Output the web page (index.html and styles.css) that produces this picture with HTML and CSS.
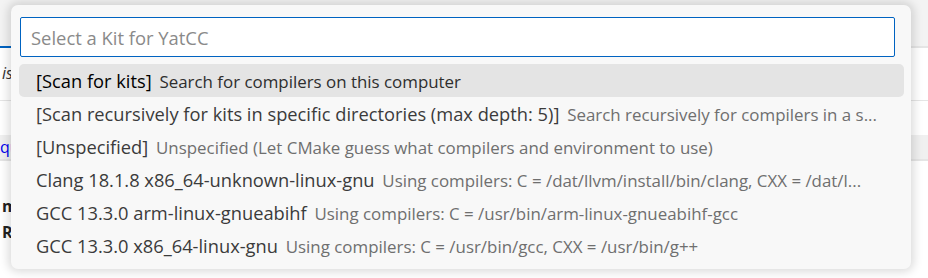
FILE: index.html
```html
<!DOCTYPE html>
<html lang="en">

<head>
    <meta charset="UTF-8">
    <meta name="viewport" content="width=device-width, initial-scale=1.0">
    <title>Select a Kit</title>
    <link rel="stylesheet" href="styles.css">
</head>

<body>

    <!-- editor behind the quick pick -->
    <div class="backdrop">
        <div class="bar-top"></div>
        <div class="input-edge"><span class="focus"></span></div>
        <div class="line italic">is</div>
        <div class="rule"></div>
        <div class="gap"></div>
        <div class="band"><span class="link">qu</span></div>
        <div class="gap2"></div>
        <div class="line bold">ma</div>
        <div class="line bold">RS</div>
    </div>

    <div class="quick-input">
        <div class="filter">
            <input type="text" placeholder="Select a Kit for YatCC">
        </div>
        <ul class="picks">
            <li class="pick selected">
                <span class="label">[Scan for kits]</span>
                <span class="desc">Search for compilers on this computer</span>
            </li>
            <li class="pick">
                <span class="label">[Scan recursively for kits in specific directories (max depth: 5)]</span>
                <span class="desc">Search recursively for compilers in a s...</span>
            </li>
            <li class="pick">
                <span class="label">[Unspecified]</span>
                <span class="desc">Unspecified (Let CMake guess what compilers and environment to use)</span>
            </li>
            <li class="pick">
                <span class="label">Clang 18.1.8 x86_64-unknown-linux-gnu</span>
                <span class="desc">Using compilers: C = /dat/llvm/install/bin/clang, CXX = /dat/l...</span>
            </li>
            <li class="pick">
                <span class="label">GCC 13.3.0 arm-linux-gnueabihf</span>
                <span class="desc">Using compilers: C = /usr/bin/arm-linux-gnueabihf-gcc</span>
            </li>
            <li class="pick">
                <span class="label">GCC 13.3.0 x86_64-linux-gnu</span>
                <span class="desc">Using compilers: C = /usr/bin/gcc, CXX = /usr/bin/g++</span>
            </li>
        </ul>
    </div>

</body>

</html>
```

FILE: styles.css
```css
body {
    margin: 0;
    padding: 0;
    background-color: #ffffff;
    font-family: 'Open Sans', 'Noto Sans', sans-serif;
    overflow: hidden;
    height: 278px;
    position: relative;
}

/* the editor underneath */
.backdrop {
    display: flex;
    flex-direction: column;
}

.bar-top {
    height: 46px;
    background-color: #f3f3f3;
}

.input-edge {
    display: flex;
    height: 2px;
    background-color: #e5e5e5;
}

.input-edge .focus {
    width: 40px;
    background-color: #0063c1;
}

.line {
    height: 26px;
    line-height: 26px;
    font-size: 16px;
    color: #333;
    padding-left: 2px;
}

.italic {
    margin-top: 12px;
    font-style: italic;
}

.bold {
    font-weight: bold;
    color: #222;
}

.rule {
    margin-top: 14px;
    height: 1px;
    background-color: #e5e5e5;
}

.gap {
    height: 34px;
}

.band {
    height: 24px;
    line-height: 24px;
    font-size: 16px;
    background-color: #f0f0f0;
    border-bottom: 2px solid #e5e5e5;
}

.link {
    color: #0000ee;
}

.gap2 {
    height: 32px;
}

/* quick pick widget */
.quick-input {
    position: absolute;
    left: 11px;
    top: 5px;
    width: 900px;
    height: 264px;
    box-sizing: border-box;
    background-color: #f8f8f8;
    border-radius: 7px;
    box-shadow: 0 0 10px 3px rgba(0, 0, 0, 0.14);
    padding: 12px 7px 8px 8px;
}

.filter {
    padding: 0 9px 0 1px;
}

.filter input {
    width: 100%;
    height: 40px;
    box-sizing: border-box;
    border: 1px solid #0063c1;
    border-radius: 2px;
    background-color: #ffffff;
    padding: 0 10px;
    font-family: inherit;
    font-size: 18.4px;
    outline: none;
}

.filter input::placeholder {
    color: #8a8a8a;
}

.picks {
    list-style: none;
    margin: 7px 0 0 0;
    padding: 0;
}

.pick {
    height: 33px;
    line-height: 33px;
    padding: 0 20px 0 17px;
    border-radius: 5px;
    white-space: nowrap;
    overflow: hidden;
    font-size: 18.3px;
    color: #3b3b3b;
}

.pick.selected {
    background-color: #e4e4e4;
    color: #000000;
}

.desc {
    margin-left: 3px;
    font-size: 16.9px;
    color: #6f6f6f;
}

.pick.selected .desc {
    color: #2e2e2e;
}
```
